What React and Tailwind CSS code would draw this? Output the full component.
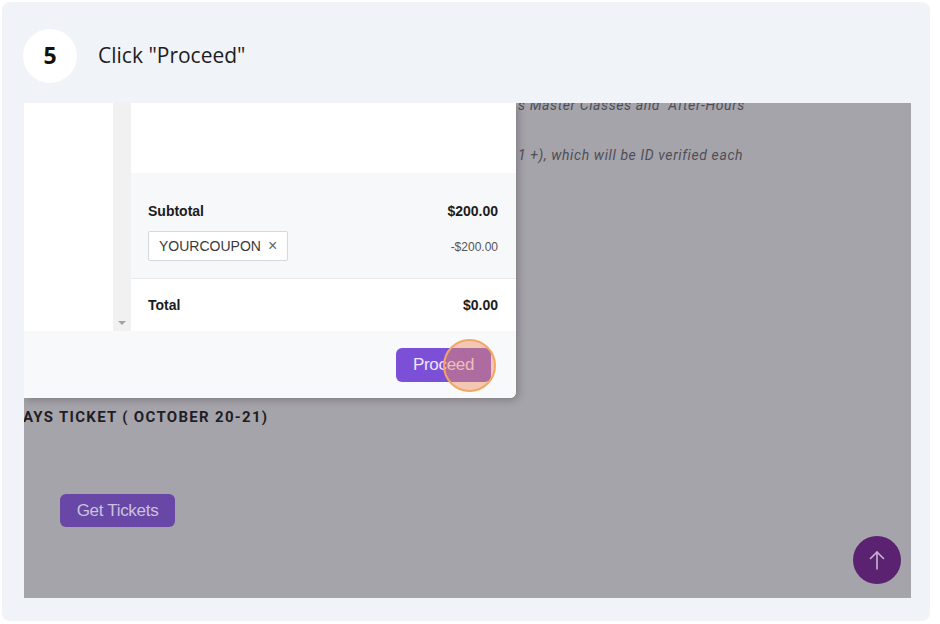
import React from 'react'

const ArrowUp = () => (
    <svg width="20" height="22" viewBox="0 0 20 22" fill="none" stroke="#c9b6d3" strokeWidth="1.6" strokeLinecap="round" strokeLinejoin="round">
        <path d="M10 20V3" />
        <path d="M3.5 9.5L10 3l6.5 6.5" />
    </svg>
)

const CheckoutModal = () => (
    <div className="absolute left-0 top-0 w-[492px] bg-white rounded-br-md shadow-[2px_2px_8px_rgba(0,0,0,0.25)] font-['Liberation_Sans',Arial,sans-serif]">
        <div className="flex h-[228px]">
            <div className="w-[89px] bg-white"></div>
            {/* scrollbar */}
            <div className="w-[18px] bg-[#f1f1f1] flex flex-col justify-end items-center pb-[6px]">
                <div className="w-0 h-0 border-l-[4px] border-r-[4px] border-t-[4px] border-l-transparent border-r-transparent border-t-[#a3a3a3]"></div>
            </div>
            <div className="flex-1 flex flex-col">
                <div className="h-[70px] bg-white"></div>
                <div className="h-[106px] bg-[#f7f8fa] border-b border-[#e6e8eb] px-[17px] pt-[28px]">
                    <div className="flex justify-between items-center text-[14px] font-bold text-[#1c1c1c]">
                        <span>Subtotal</span>
                        <span className="pr-[1px]">$200.00</span>
                    </div>
                    <div className="flex justify-between items-center mt-[9px]">
                        <div className="h-[30px] px-[10px] flex items-center gap-[7px] border border-[#d6d8db] bg-white rounded-[2px] text-[14px] text-[#3a3a3a]">
                            <span>YOURCOUPON</span>
                            <span className="text-[16px] text-[#666]">×</span>
                        </div>
                        <span className="text-[12px] text-[#555] pr-[1px] pt-[2px]">-$200.00</span>
                    </div>
                </div>
                <div className="flex-1 bg-white px-[17px] flex justify-between items-center text-[14px] font-bold text-[#1c1c1c]">
                    <span>Total</span>
                    <span className="pr-[1px]">$0.00</span>
                </div>
            </div>
        </div>
        <div className="h-[67px] bg-[#f8f9fb] flex justify-end items-start pt-[17px] pr-[25px] rounded-br-md">
            <div className="relative">
                <button className="h-[34px] w-[95px] rounded-md bg-[#7b50d6] text-[17px] text-[#efe6ff] tracking-[-0.3px]">
                    Proceed
                </button>
                <div className="absolute left-[47px] top-[-9px] w-[53px] h-[53px] rounded-full border-2 border-[#f3a662] bg-[rgba(236,140,95,0.45)]"></div>
            </div>
        </div>
    </div>
)

export default function App() {
    return (
        <div className="w-[940px] h-[624px] bg-white p-[2px]">
            <div className="w-[928px] h-[619px] bg-[#f0f3f8] rounded-lg pl-[21px]">
                {/* Step header */}
                <header className="h-[101px] flex items-center gap-[21px] pt-[6px]">
                    <div className="w-[54px] h-[54px] rounded-full bg-white flex items-center justify-center text-[23px] font-bold text-[#111] font-['Open_Sans',sans-serif]">
                        5
                    </div>
                    <h1 className="text-[21px] text-[#1d1d1f] font-['Open_Sans',sans-serif]">Click "Proceed"</h1>
                </header>

                {/* Screenshot */}
                <div className="relative ml-[1px] w-[887px] h-[495px] bg-[#a6a4ab] overflow-hidden">
                    <div className="font-['Roboto',sans-serif] italic text-[14px] tracking-[0.6px] text-[#4f4e55]">
                        <p className="ml-[494px] -mt-[8px] leading-[20px]">s Master Classes and "After-Hours"</p>
                        <p className="ml-[494px] mt-[30px] leading-[20px]">1 +), which will be ID verified each</p>
                    </div>
                    <h2 className="-ml-[12px] mt-[242px] font-['Roboto',sans-serif] font-bold text-[15px] tracking-[1.3px] text-[#1f1e24] leading-[20px]">
                        DAYS TICKET ( OCTOBER 20-21)
                    </h2>
                    <button className="ml-[36px] mt-[67px] h-[33px] w-[115px] rounded-md bg-[#6847a6] text-[17px] text-[#cbc2de] tracking-[-0.3px] font-['Liberation_Sans',Arial,sans-serif]">
                        Get Tickets
                    </button>

                    <CheckoutModal />

                    <div className="absolute left-[829px] top-[433px] w-[48px] h-[48px] rounded-full bg-[#5a2270] flex items-center justify-center">
                        <ArrowUp />
                    </div>
                </div>
            </div>
        </div>
    )
}
